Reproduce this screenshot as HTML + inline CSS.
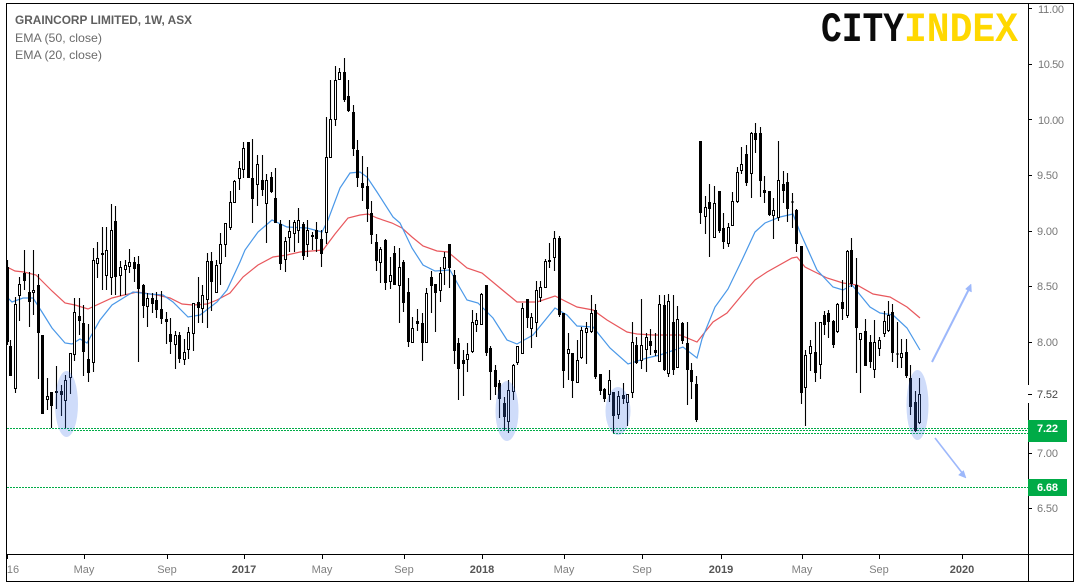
<!DOCTYPE html>
<html><head><meta charset="utf-8"><title>GrainCorp chart</title>
<style>html,body{margin:0;padding:0;background:#fff}svg{display:block}text{font-family:"Liberation Sans",sans-serif}</style></head>
<body>
<svg width="1080" height="587" viewBox="0 0 1080 587" xmlns="http://www.w3.org/2000/svg">
<rect width="1080" height="587" fill="#fff"/>
<!-- level lines -->
<g fill="none" stroke="#00ab47" stroke-width="1" stroke-dasharray="2 1">
<path d="M7 428.5H1028M68 430.5H1028M613 433.5H1028M7 487.5H1028"/>
</g>
<!-- EMAs -->
<path fill="none" stroke="#e8575c" stroke-width="1.2" d="M7 267L15 271L24 272L36 275L44 283L52 291L65 303L75 305L88 309L112 298L120 296L137 292L157 295L170 298L182 304L193 305L207 304L217 300L230 293L243 277L258 265L273 257L287 255L300 252L323 250L335 234L348 218L360 215L368 214L377 218L392 223L402 228L412 237L423 246L437 251L448 252L467 268L482 273L500 288L517 302L537 302L555 296L577 307L593 310L607 320L627 332L637 334L653 335L680 335L697 342L713 322L727 313L742 295L755 280L767 272L792 258L797 257L805 267L827 278L843 283L857 285L873 294L890 297L907 307L920 318"/>
<path fill="none" stroke="#4a98e8" stroke-width="1.2" d="M7 297L12 302L23 298L33 298L42 312L52 328L65 343L72 344L80 339L87 343L100 320L112 305L133 292L150 294L163 295L173 302L188 317L200 315L217 302L227 290L240 262L245 250L258 232L272 220L287 227L307 228L322 232L328 220L340 188L350 173L360 172L367 177L377 192L393 217L400 223L412 248L423 265L435 271L450 270L460 288L467 300L478 303L493 318L507 340L517 344L533 335L555 308L567 315L577 326L593 327L610 348L628 364L647 358L660 355L683 347L697 358L702 339L715 307L728 289L742 260L755 232L765 223L780 217L793 214L800 232L817 270L833 287L843 290L852 285L870 307L880 313L893 315L907 328L920 350"/>
<!-- wicks -->
<path fill="none" stroke="#000" stroke-width="1.1" d="M7.5 260V345M10.5 340V376M15.5 297V393M19.5 277V321M24.5 250V290M29.5 272V327M33.5 250V315M38.5 274V379M42.5 335V414M47.5 378V410M51.5 392V428M56.5 366V409M61.5 385V416M65.5 375V428M70.5 353V394M74.5 298V361M79.5 298V335M83.5 305V376M88.5 324V382M93.5 248V372M97.5 242V278M102.5 227V290M106.5 227V290M111.5 204V295M115.5 206V295M120.5 261V296M125.5 260V295M129.5 249V273M134.5 257V282M138.5 256V362M143.5 284V318M147.5 293V327M152.5 293V313M156.5 292V318M161.5 291V324M166.5 312V344M170.5 318V354M175.5 331V369M179.5 332V363M184.5 339V365M188.5 327V359M193.5 303V351M198.5 277V323M202.5 285V323M207.5 253V328M211.5 252V311M216.5 260V293M220.5 233V285M225.5 223V257M230.5 191V230M234.5 180V202M239.5 161V190M243.5 142V178M248.5 142V178M252.5 139V223M257.5 155V206M262.5 155V196M266.5 174V243M271.5 172V193M275.5 168V223M280.5 220V270M285.5 237V272M289.5 220V252M294.5 220V252M298.5 208V243M303.5 222V260M307.5 220V257M312.5 232V250M316.5 222V252M321.5 230V267M326.5 117V244M330.5 80V157M335.5 66V126M339.5 68V80M344.5 58V102M348.5 80V112M353.5 105V156M357.5 140V187M362.5 156V201M367.5 167V222M371.5 201V244M376.5 234V271M380.5 247V283M385.5 239V290M390.5 257V289M394.5 246V285M399.5 248V323M403.5 260V312M408.5 278V347M412.5 317V343M417.5 309V331M422.5 313V361M426.5 288V342M431.5 271V313M435.5 284V332M440.5 267V302M444.5 252V285M449.5 244V288M454.5 270V364M458.5 338V400M463.5 350V396M467.5 343V372M472.5 310V353M476.5 313V332M481.5 293V325M486.5 285V356M490.5 346V400M495.5 365V395M499.5 380V418M504.5 397V430M508.5 380V433M513.5 364V400M517.5 346V365M522.5 303V353M527.5 299V328M531.5 313V348M536.5 281V337M540.5 281V302M545.5 259V288M549.5 243V268M554.5 231V271M559.5 236V317M563.5 313V388M568.5 333V380M572.5 353V398M577.5 340V383M581.5 327V359M586.5 322V364M591.5 295V333M595.5 304V379M600.5 374V395M604.5 388V402M609.5 370V402M613.5 392V433M618.5 391V419M623.5 383V404M627.5 394V426M632.5 322V398M636.5 337V364M641.5 299V369M646.5 333V372M650.5 329V355M655.5 333V356M659.5 295V361M664.5 295V371M668.5 294V377M673.5 295V375M677.5 306V368M682.5 322V344M687.5 322V405M691.5 363V399M696.5 376V422M700.5 141V224M705.5 196V234M709.5 184V257M714.5 186V238M719.5 191V233M723.5 213V249M728.5 223V247M732.5 192V225M737.5 167V203M741.5 147V174M746.5 145V186M751.5 132V198M755.5 123V153M760.5 127V197M764.5 176V203M769.5 191V216M773.5 198V239M778.5 141V221M783.5 171V203M787.5 173V222M792.5 193V228M796.5 209V252M801.5 246V404M805.5 350V426M810.5 340V371M815.5 322V382M820.5 322V379M824.5 311V335M828.5 310V338M833.5 320V348M837.5 303V333M842.5 280V320M847.5 250V318M851.5 238V287M856.5 258V373M860.5 333V393M865.5 319V366M870.5 335V368M874.5 320V378M879.5 337V356M884.5 311V337M888.5 301V332M892.5 304V362M897.5 322V368M901.5 339V368M906.5 339V378M910.5 365V415M915.5 391V432M919.5 378V424"/>
<!-- filled bodies -->
<path fill="none" stroke="#000" stroke-width="3" d="M7.5 267V342M10.5 346V376M24.5 273V281M29.5 292V302M38.5 285V333M42.5 335V414M51.5 392V406M56.5 391V393M61.5 391V395M79.5 316V321M83.5 323V352M88.5 359V373M102.5 253V255M115.5 221V277M134.5 262V269M138.5 264V289M143.5 285V306M152.5 298V304M156.5 300V310M161.5 309V319M166.5 319V322M170.5 334V342M179.5 335V359M198.5 302V308M211.5 261V282M248.5 142V178M252.5 178V199M262.5 180V190M271.5 177V192M275.5 198V223M280.5 224V264M303.5 224V256M312.5 235V237M316.5 230V239M321.5 239V254M344.5 72V100M348.5 96V111M353.5 112V149M357.5 150V178M362.5 183V188M367.5 186V209M371.5 213V235M376.5 242V261M385.5 240V283M394.5 253V285M403.5 262V303M408.5 292V342M417.5 321V324M422.5 323V343M431.5 277V286M435.5 284V293M449.5 244V268M454.5 275V351M458.5 343V369M463.5 360V364M486.5 285V353M490.5 348V372M495.5 370V387M499.5 383V399M504.5 403V417M527.5 299V318M549.5 260V262M559.5 238V315M563.5 313V371M572.5 353V381M595.5 310V377M600.5 374V391M604.5 389V399M613.5 392V416M623.5 395V399M636.5 345V363M650.5 341V346M655.5 350V353M664.5 305V370M673.5 322V370M682.5 323V341M687.5 343V370M691.5 370V382M696.5 384V420M700.5 141V213M709.5 202V209M719.5 191V231M723.5 228V242M746.5 154V183M755.5 133V140M760.5 133V181M764.5 190V193M769.5 191V215M783.5 184V191M787.5 182V209M792.5 201.500V202.500M796.5 210V244M801.5 246V393M815.5 352V373M824.5 315V325M828.5 313V322M833.5 321V345M842.5 302V309M851.5 250V284M856.5 285V328M865.5 331V366M870.5 342V362M892.5 312V353M897.5 353.500V354.500M906.5 352V376M910.5 378V407M915.5 402V431"/>
<!-- hollow bodies -->
<path fill="#fff" stroke="#000" stroke-width="1" d="M14.500 304.500h2V388.500h-2zM18.500 284.500h2V295.500h-2zM32.500 290.500h2V292.500h-2zM46.500 396.500h2V399.500h-2zM64.500 380.500h2V400.500h-2zM69.500 353.500h2V377.500h-2zM73.500 312.500h2V354.500h-2zM92.500 260.500h2V362.500h-2zM96.500 258.500h2V263.500h-2zM105.500 250.500h2V275.500h-2zM110.500 230.500h2V277.500h-2zM119.500 267.500h2V275.500h-2zM124.500 265.500h2V269.500h-2zM128.500 262.500h2V266.500h-2zM146.500 298.500h2V306.500h-2zM174.500 335.500h2V344.500h-2zM183.500 352.500h2V359.500h-2zM187.500 332.500h2V349.500h-2zM192.500 303.500h2V333.500h-2zM201.500 295.500h2V308.500h-2zM206.500 261.500h2V299.500h-2zM215.500 265.500h2V292.500h-2zM219.500 244.500h2V263.500h-2zM224.500 223.500h2V244.500h-2zM229.500 202.500h2V227.500h-2zM233.500 181.500h2V202.500h-2zM238.500 168.500h2V178.500h-2zM242.500 148.500h2V169.500h-2zM256.500 164.500h2V184.500h-2zM265.500 180.500h2V203.500h-2zM284.500 241.500h2V259.500h-2zM288.500 231.500h2V237.500h-2zM293.500 222.500h2V233.500h-2zM297.500 220.500h2V230.500h-2zM306.500 230.500h2V244.500h-2zM325.500 157.500h2V232.500h-2zM329.500 119.500h2V157.500h-2zM334.500 80.500h2V119.500h-2zM338.500 72.500h2V79.500h-2zM379.500 249.500h2V262.500h-2zM389.500 275.500h2V281.500h-2zM398.500 267.500h2V285.500h-2zM411.500 328.500h2V342.500h-2zM425.500 293.500h2V342.500h-2zM439.500 273.500h2V290.500h-2zM443.500 257.500h2V268.500h-2zM466.500 354.500h2V359.500h-2zM471.500 322.500h2V351.500h-2zM475.500 320.500h2V324.500h-2zM480.500 294.500h2V324.500h-2zM507.500 390.500h2V421.500h-2zM512.500 365.500h2V391.500h-2zM516.500 346.500h2V362.500h-2zM521.500 308.500h2V353.500h-2zM530.500 317.500h2V328.500h-2zM535.500 290.500h2V322.500h-2zM539.500 287.500h2V297.500h-2zM544.500 261.500h2V287.500h-2zM553.500 238.500h2V257.500h-2zM567.500 349.500h2V353.500h-2zM576.500 360.500h2V382.500h-2zM580.500 330.500h2V357.500h-2zM585.500 328.500h2V332.500h-2zM590.500 313.500h2V331.500h-2zM608.500 380.500h2V394.500h-2zM617.500 396.500h2V414.500h-2zM626.500 394.500h2V402.500h-2zM631.500 342.500h2V392.500h-2zM640.500 345.500h2V360.500h-2zM645.500 337.500h2V349.500h-2zM658.500 304.500h2V361.500h-2zM667.500 301.500h2V373.500h-2zM676.500 319.500h2V367.500h-2zM704.500 207.500h2V216.500h-2zM713.500 203.500h2V237.500h-2zM727.500 227.500h2V243.500h-2zM731.500 201.500h2V225.500h-2zM736.500 172.500h2V201.500h-2zM740.500 164.500h2V170.500h-2zM750.500 133.500h2V173.500h-2zM772.500 210.500h2V215.500h-2zM777.500 180.500h2V217.500h-2zM804.500 355.500h2V387.500h-2zM809.500 346.500h2V353.500h-2zM819.500 322.500h2V364.500h-2zM836.500 304.500h2V331.500h-2zM846.500 251.500h2V315.500h-2zM859.500 333.500h2V339.500h-2zM873.500 342.500h2V369.500h-2zM878.500 340.500h2V348.500h-2zM883.500 321.500h2V333.500h-2zM887.500 315.500h2V330.500h-2zM900.500 353.500h2V357.500h-2zM918.500 394.500h2V422.500h-2z"/>
<!-- highlight ellipses -->
<g fill="#3f73eb" fill-opacity=".25">
<ellipse cx="66.500" cy="404" rx="11.500" ry="33"/>
<ellipse cx="507" cy="411" rx="11.500" ry="30"/>
<ellipse cx="618" cy="411" rx="12.500" ry="24"/>
<ellipse cx="917.500" cy="405" rx="11" ry="35"/>
</g>
<!-- arrows -->
<g stroke="#9db8fb" fill="#9db8fb">
<path d="M932 362L969 289" fill="none" stroke-width="2"/>
<path d="M971 284L971.500 292L965.500 289Z" stroke-width=".5"/>
<path d="M935 438L963 474" fill="none" stroke-width="1.600"/>
<path d="M966 478L958.500 475L963.500 470.500Z" stroke-width=".5"/>
</g>
<!-- frame and axes -->
<g fill="none" stroke="#000" stroke-width="1">
<path d="M6.500 3.500H1073.500V581.500H6.500Z"/>
<path d="M6.500 554.500H1073.500"/>
<path d="M1028.500 3.500V385M1028.500 403V581.500"/>
<path d="M1028 8.500h4M1028 64.500h4M1028 119.500h4M1028 175.500h4M1028 231.500h4M1028 286.500h4M1028 342.500h4M1028 394.500h4M1028 453.500h4M1028 508.500h4"/>
<path d="M7.500 554V559M84.500 554V559M167.500 554V559M244.500 554V559M322.500 554V559M404.500 554V559M482.500 554V559M564.500 554V559M642.500 554V559M721.500 554V559M802.500 554V559M879.500 554V559M962.500 554V559"/>
</g>
<!-- price badges -->
<rect x="1028" y="420" width="39" height="22" fill="#00ab47"/>
<rect x="1028" y="479" width="39" height="17" fill="#00ab47"/>
<!-- price labels -->
<g font-size="11" fill="#777">
<text x="1038" y="13" textLength="26">11.00</text>
<text x="1038" y="68" textLength="26">10.50</text>
<text x="1038" y="124" textLength="26">10.00</text>
<text x="1037" y="179" textLength="21">9.50</text>
<text x="1037" y="235" textLength="21">9.00</text>
<text x="1037" y="290" textLength="21">8.50</text>
<text x="1037" y="346" textLength="21">8.00</text>
<text x="1037" y="398" textLength="21" fill="#444">7.52</text>
<text x="1037" y="457" textLength="21">7.00</text>
<text x="1037" y="512" textLength="21">6.50</text>
<text x="1037" y="432" textLength="21" fill="#fff" font-weight="bold">7.22</text>
<text x="1037" y="491" textLength="21" fill="#fff" font-weight="bold">6.68</text>
</g>
<!-- time labels -->
<g font-size="11" fill="#808080" text-anchor="middle">
<text x="13" y="573">16</text>
<text x="84" y="573">May</text>
<text x="167" y="573">Sep</text>
<text x="244" y="573" fill="#555" font-weight="bold">2017</text>
<text x="322" y="573">May</text>
<text x="404" y="573">Sep</text>
<text x="482" y="573" fill="#555" font-weight="bold">2018</text>
<text x="564" y="573">May</text>
<text x="642" y="573">Sep</text>
<text x="721" y="573" fill="#555" font-weight="bold">2019</text>
<text x="802" y="573">May</text>
<text x="879" y="573">Sep</text>
<text x="962" y="573" fill="#555" font-weight="bold">2020</text>
</g>
<!-- legend -->
<text x="15" y="24" font-size="12" font-weight="bold" fill="#5f5f5f" textLength="177" lengthAdjust="spacingAndGlyphs">GRAINCORP LIMITED, 1W, ASX</text>
<text x="15" y="42" font-size="12" fill="#6b6b6b" textLength="87" lengthAdjust="spacingAndGlyphs">EMA (50, close)</text>
<text x="15" y="59" font-size="12" fill="#6b6b6b" textLength="87" lengthAdjust="spacingAndGlyphs">EMA (20, close)</text>
<!-- logo -->
<g transform="translate(821,41) scale(1,1.17)" font-size="36" font-weight="bold">
<text x="0" y="0" fill="#0b0b0b" style="font-family:'Liberation Mono',monospace" textLength="83" lengthAdjust="spacingAndGlyphs">CITY</text>
<text x="83" y="0" fill="#ffd800" style="font-family:'Liberation Mono',monospace" textLength="114" lengthAdjust="spacingAndGlyphs">INDEX</text>
</g>
</svg>
</body></html>
